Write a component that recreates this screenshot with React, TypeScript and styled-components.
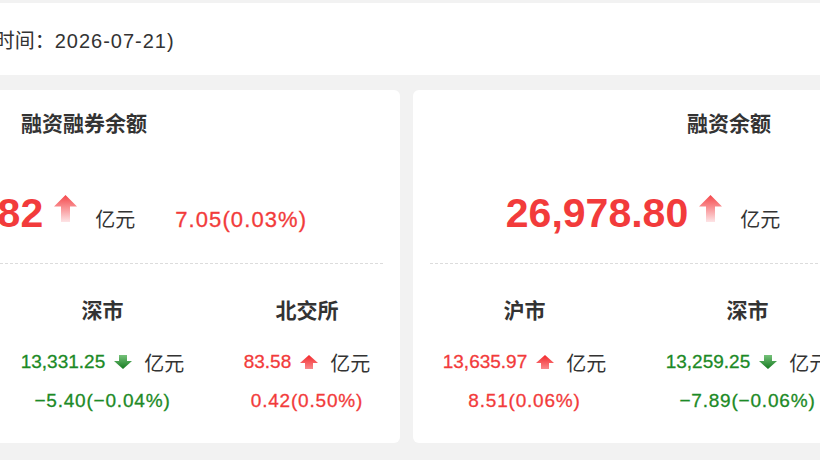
import React from 'react';
import styled, { createGlobalStyle } from 'styled-components';

const RED = '#f23b3b';
const GREEN = '#1c8a26';
const TEXT = '#333333';

const GlobalStyle = createGlobalStyle`
  html, body {
    margin: 0;
    padding: 0;
    background: #f2f2f2;
    overflow: hidden;
  }
  body {
    font-family: "Liberation Sans", "Noto Sans CJK SC", sans-serif;
    color: ${TEXT};
  }
`;

const Page = styled.div`
  width: 1277px;
  margin-left: -232px;
  padding-top: 3px;
  display: flex;
  flex-direction: column;
  gap: 15px;
`;

const Header = styled.header`
  height: 72px;
  background: #ffffff;
  display: flex;
  align-items: center;
  padding: 0 20px;
`;

const HeaderTitle = styled.h1`
  margin: 0;
  font-size: 20px;
  font-weight: 700;
  color: ${TEXT};
`;

const HeaderNote = styled.span`
  margin-left: 40px;
  font-size: 20px;
  color: ${TEXT};
`;

const HeaderDate = styled.span`
  letter-spacing: 1px;
`;

const CardRow = styled.div`
  display: grid;
  grid-template-columns: 632px 632px;
  gap: 13px;
`;

const Card = styled.section`
  background: #ffffff;
  border-radius: 6px;
  padding: 20px 0 28px;
  display: flex;
  flex-direction: column;
`;

const CardTitle = styled.h2`
  margin: 0;
  text-align: center;
  font-size: 21px;
  line-height: 28px;
  font-weight: 700;
  color: ${TEXT};
`;

const BigRow = styled.div`
  margin-top: 55px;
  display: flex;
  justify-content: center;
  align-items: baseline;
`;

const BigAmount = styled.span<{ $up: boolean }>`
  font-size: 41px;
  line-height: 41px;
  font-weight: 700;
  color: ${(p) => (p.$up ? RED : GREEN)};
`;

const BigArrowSvg = styled.svg`
  margin-left: 11px;
  margin-bottom: 5px;
  vertical-align: baseline;
`;

const BigUnit = styled.span`
  margin-left: 18px;
  font-size: 20px;
  color: ${TEXT};
`;

const BigChange = styled.span<{ $up: boolean }>`
  margin-left: 40px;
  font-size: 22px;
  letter-spacing: 1.1px;
  -webkit-text-stroke: 0.3px currentColor;
  color: ${(p) => (p.$up ? RED : GREEN)};
`;

const Divider = styled.hr`
  margin: 29px 17px 0;
  border: 0;
  border-top: 1px dashed #dcdcdc;
  height: 0;
`;

const Markets = styled.div`
  margin-top: 33px;
  display: flex;
  justify-content: space-around;
`;

const Market = styled.div`
  display: flex;
  flex-direction: column;
  align-items: center;
`;

const MarketName = styled.div`
  font-size: 21px;
  line-height: 28px;
  font-weight: 700;
  color: ${TEXT};
`;

const ValueRow = styled.div`
  margin-top: 23px;
  display: flex;
  align-items: center;
  height: 28px;
`;

const Value = styled.span<{ $up: boolean }>`
  font-size: 19px;
  -webkit-text-stroke: 0.3px currentColor;
  color: ${(p) => (p.$up ? RED : GREEN)};
`;

const SmallArrowSvg = styled.svg`
  margin-left: 9px;
  flex: none;
`;

const Unit = styled.span`
  margin-left: 12px;
  font-size: 20px;
  color: ${TEXT};
`;

const Change = styled.div<{ $up: boolean }>`
  margin-top: 11px;
  font-size: 19px;
  line-height: 28px;
  letter-spacing: 0.8px;
  -webkit-text-stroke: 0.3px currentColor;
  color: ${(p) => (p.$up ? RED : GREEN)};
`;

function BigArrow({ id }: { id: string }) {
  return (
    <BigArrowSvg width="23" height="27" viewBox="0 0 23 27">
      <defs>
        <linearGradient id={id} x1="0" y1="0" x2="0" y2="1">
          <stop offset="0" stopColor="#f5474a" />
          <stop offset="1" stopColor="#fde4e6" />
        </linearGradient>
      </defs>
      <path d="M11.5 0 L23 11.5 L16 11.5 L16 27 L7 27 L7 11.5 L0 11.5 Z" fill={`url(#${id})`} />
    </BigArrowSvg>
  );
}

function SmallArrow({ up, id }: { up: boolean; id: string }) {
  return (
    <SmallArrowSvg width="18" height="14" viewBox="0 0 18 14">
      <defs>
        <linearGradient id={id} x1="0" y1={up ? '0' : '1'} x2="0" y2={up ? '1' : '0'}>
          <stop offset="0" stopColor={up ? '#f3272b' : '#147a1f'} />
          <stop offset="1" stopColor={up ? '#f98a8c' : '#76c27a'} />
        </linearGradient>
      </defs>
      {up ? (
        <path d="M9 0 L18 8 L13 8 L13 14 L5 14 L5 8 L0 8 Z" fill={`url(#${id})`} />
      ) : (
        <path d="M5 0 L13 0 L13 6 L18 6 L9 14 L0 6 L5 6 Z" fill={`url(#${id})`} />
      )}
    </SmallArrowSvg>
  );
}

type MarketData = { name: string; value: string; change: string; up: boolean };
type CardData = { key: string; title: string; value: string; change: string; up: boolean; markets: MarketData[] };

const cards: CardData[] = [
  {
    key: 'total',
    title: '融资融券余额',
    value: '27,137.82',
    change: '7.05(0.03%)',
    up: true,
    markets: [
      { name: '沪市', value: '13,722.99', change: '12.03(0.09%)', up: true },
      { name: '深市', value: '13,331.25', change: '−5.40(−0.04%)', up: false },
      { name: '北交所', value: '83.58', change: '0.42(0.50%)', up: true },
    ],
  },
  {
    key: 'financing',
    title: '融资余额',
    value: '26,978.80',
    change: '1.04(0.00%)',
    up: true,
    markets: [
      { name: '沪市', value: '13,635.97', change: '8.51(0.06%)', up: true },
      { name: '深市', value: '13,259.25', change: '−7.89(−0.06%)', up: false },
      { name: '北交所', value: '83.58', change: '0.42(0.50%)', up: true },
    ],
  },
];

export default function App() {
  return (
    <>
      <GlobalStyle />
      <Page>
        <Header>
          <HeaderTitle>融资融券余额</HeaderTitle>
          <HeaderNote>
            (数据时间：<HeaderDate>2026-07-21</HeaderDate>)
          </HeaderNote>
        </Header>
        <CardRow>
          {cards.map((c) => (
            <Card key={c.key}>
              <CardTitle>{c.title}</CardTitle>
              <BigRow>
                <BigAmount $up={c.up}>
                  {c.value}
                  <BigArrow id={`big-${c.key}`} />
                </BigAmount>
                <BigUnit>亿元</BigUnit>
                <BigChange $up={c.up}>{c.change}</BigChange>
              </BigRow>
              <Divider />
              <Markets>
                {c.markets.map((m, i) => (
                  <Market key={m.name}>
                    <MarketName>{m.name}</MarketName>
                    <ValueRow>
                      <Value $up={m.up}>{m.value}</Value>
                      <SmallArrow up={m.up} id={`sm-${c.key}-${i}`} />
                      <Unit>亿元</Unit>
                    </ValueRow>
                    <Change $up={m.up}>{m.change}</Change>
                  </Market>
                ))}
              </Markets>
            </Card>
          ))}
        </CardRow>
      </Page>
    </>
  );
}
